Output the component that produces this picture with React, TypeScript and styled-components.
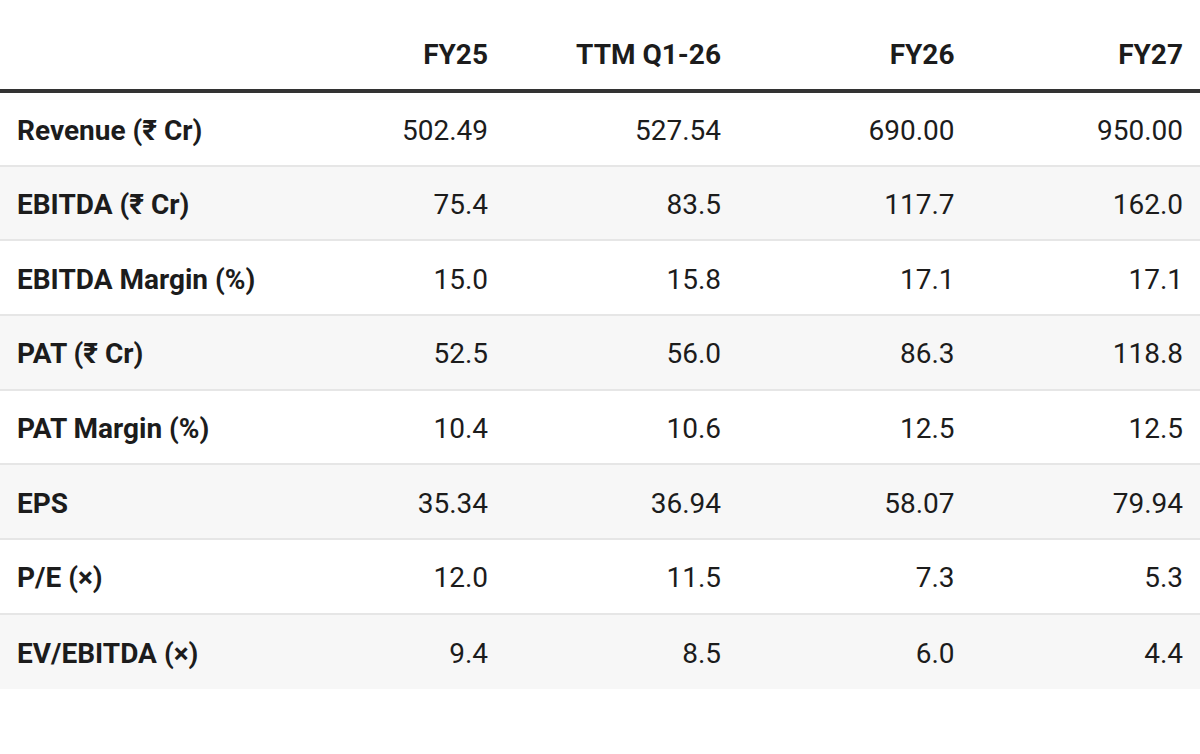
import React from "react";
import styled, { createGlobalStyle } from "styled-components";

const Global = createGlobalStyle`
  html, body { margin: 0; padding: 0; background: #ffffff; }
  body { font-family: Roboto, "Liberation Sans", Arial, sans-serif; color: #1c1c1c; }
`;

const Table = styled.table`
  width: 1200px;
  border-collapse: collapse;
  table-layout: fixed;
  font-family: Roboto, "Liberation Sans", Arial, sans-serif;
  font-size: 28px;
  color: #1c1c1c;
`;

const HeadCell = styled.th<{ $left?: boolean }>`
  height: 91px;
  box-sizing: border-box;
  padding: 20px 17px 0 17px;
  font-weight: 700;
  text-align: ${(p) => (p.$left ? "left" : "right")};
  line-height: 32px;
  border-bottom: 4px solid #333333;
  vertical-align: middle;
`;

const Row = styled.tr<{ $shaded: boolean; $last: boolean }>`
  background: ${(p) => (p.$shaded ? "#f7f7f7" : "#ffffff")};
  border-bottom: ${(p) => (p.$last ? "none" : "2px solid #e6e6e6")};
`;

const LabelCell = styled.td`
  height: 74.7px;
  box-sizing: border-box;
  padding: 4px 17px 0 17px;
  font-weight: 700;
  text-align: left;
  line-height: 32px;
  vertical-align: middle;
  white-space: nowrap;
`;

const ValueCell = styled.td`
  height: 74.7px;
  box-sizing: border-box;
  padding: 4px 17px 0 17px;
  font-weight: 400;
  text-align: right;
  line-height: 32px;
  vertical-align: middle;
`;

const columns = ["FY25", "TTM Q1-26", "FY26", "FY27"];
const widths = [272, 233, 233, 233.5, 228.5];

const rows: { label: string; values: string[] }[] = [
  { label: "Revenue (₹ Cr)", values: ["502.49", "527.54", "690.00", "950.00"] },
  { label: "EBITDA (₹ Cr)", values: ["75.4", "83.5", "117.7", "162.0"] },
  { label: "EBITDA Margin (%)", values: ["15.0", "15.8", "17.1", "17.1"] },
  { label: "PAT (₹ Cr)", values: ["52.5", "56.0", "86.3", "118.8"] },
  { label: "PAT Margin (%)", values: ["10.4", "10.6", "12.5", "12.5"] },
  { label: "EPS", values: ["35.34", "36.94", "58.07", "79.94"] },
  { label: "P/E (×)", values: ["12.0", "11.5", "7.3", "5.3"] },
  { label: "EV/EBITDA (×)", values: ["9.4", "8.5", "6.0", "4.4"] },
];

export default function App() {
  return (
    <>
      <Global />
      <Table>
        <colgroup>
          {widths.map((w, i) => (
            <col key={i} style={{ width: `${w}px` }} />
          ))}
        </colgroup>
        <thead>
          <tr>
            <HeadCell $left />
            {columns.map((c) => (
              <HeadCell key={c}>{c}</HeadCell>
            ))}
          </tr>
        </thead>
        <tbody>
          {rows.map((r, i) => (
            <Row key={r.label} $shaded={i % 2 === 1} $last={i === rows.length - 1}>
              <LabelCell>{r.label}</LabelCell>
              {r.values.map((v, j) => (
                <ValueCell key={j}>{v}</ValueCell>
              ))}
            </Row>
          ))}
        </tbody>
      </Table>
    </>
  );
}
